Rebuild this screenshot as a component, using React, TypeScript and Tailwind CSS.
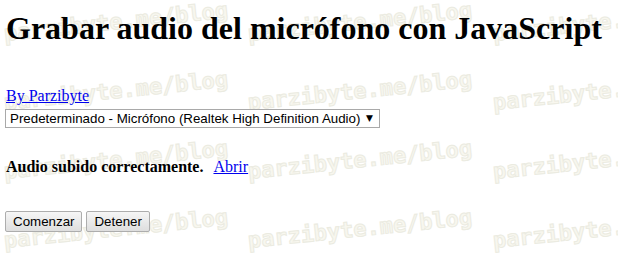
import React from "react";

const marks: { x: number; y: number }[] = [];
for (const y of [23, 92, 161, 230]) {
  for (const x of [4, 248, 493]) {
    marks.push({ x, y });
  }
}

function Watermark() {
  return (
    <div className="pointer-events-none absolute inset-0 overflow-hidden">
      {marks.map((m, i) => (
        <span
          key={i}
          className="absolute origin-left -rotate-6 whitespace-nowrap font-['DejaVu_Sans_Mono',monospace] text-[22px] font-bold leading-none text-[#f8f7ef] [-webkit-text-stroke:1px_#ebebe1]"
          style={{ left: m.x, top: m.y }}
        >
          parzibyte.me/blog
        </span>
      ))}
    </div>
  );
}

export default function App() {
  return (
    <div className="relative h-[257px] w-[618px] overflow-hidden bg-white text-black">
      <Watermark />
      <div className="relative px-[6px] font-['Liberation_Serif',serif]">
        {/* Title */}
        <h1 className="mt-[10px] text-[32px] font-bold leading-[37px]">
          Grabar audio del micrófono con JavaScript
        </h1>

        <a href="#" className="mt-[40px] block w-fit text-[16px] leading-[18px] text-[#0000ee] underline">
          By Parzibyte
        </a>

        {/* Device picker */}
        <div className="relative mt-[4px] ml-[-1px] w-[375px]">
          <select className="block h-[19px] w-full appearance-none border border-[#a9a9a9] bg-white pl-[4px] font-['Liberation_Sans',sans-serif] text-[13.33px] leading-[17px] text-black outline-none">
            <option>Predeterminado - Micrófono (Realtek High Definition Audio)</option>
          </select>
          <span className="pointer-events-none absolute right-[7px] top-[3px] font-['DejaVu_Sans',sans-serif] text-[9px] leading-[13px] text-black">
            ▼
          </span>
        </div>

        <p className="mt-[30px] text-[16px] leading-[18px]">
          <b>Audio subido correctamente.</b>
          <span className="inline-block w-[10px]" />
          <a href="#" className="text-[#0000ee] underline">
            Abrir
          </a>
        </p>

        {/* Controls */}
        <div className="mt-[35px] ml-[-1px] flex gap-[4px] font-['Liberation_Sans',sans-serif] text-[13.33px]">
          <button className="h-[21px] rounded-[2px] border border-[#adadad] bg-gradient-to-b from-[#f6f6f6] to-[#dedede] px-[7px] leading-[19px] text-black">
            Comenzar
          </button>
          <button className="h-[21px] rounded-[2px] border border-[#adadad] bg-gradient-to-b from-[#f6f6f6] to-[#dedede] px-[7px] leading-[19px] text-black">
            Detener
          </button>
        </div>
      </div>
    </div>
  );
}
